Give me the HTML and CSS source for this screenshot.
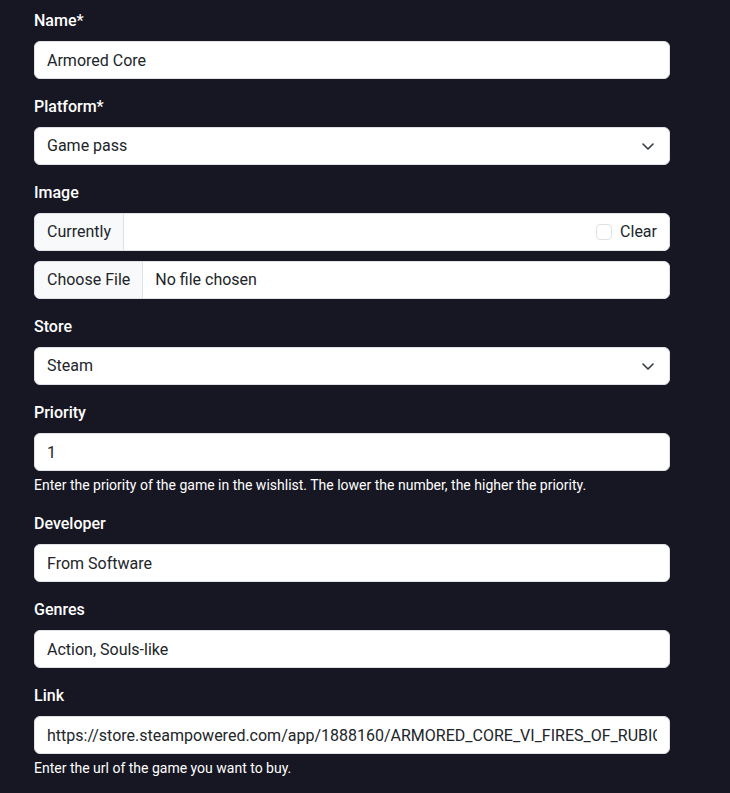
FILE: index.html
```html
<!DOCTYPE html>
<html lang="en">
<head>
<meta charset="utf-8">
<title>Edit game</title>
<link rel="stylesheet" href="styles.css">
</head>
<body>
<form class="form">
  <div class="field">
    <label class="label" for="name">Name*</label>
    <input class="control" id="name" type="text" value="Armored Core">
  </div>
  <div class="field">
    <label class="label">Platform*</label>
    <div class="control select"><span>Game pass</span>
      <svg class="chev" viewBox="0 0 12 7" width="12" height="7"><path d="M1 1l5 5 5-5" fill="none" stroke="#343a40" stroke-width="1.6" stroke-linecap="round" stroke-linejoin="round"/></svg>
    </div>
  </div>
  <div class="field">
    <label class="label">Image</label>
    <div class="group">
      <span class="addon">Currently</span>
      <div class="group-main"><span class="check"></span><span>Clear</span></div>
    </div>
    <div class="group file">
      <span class="addon">Choose File</span>
      <div class="group-main left"><span>No file chosen</span></div>
    </div>
  </div>
  <div class="field">
    <label class="label">Store</label>
    <div class="control select"><span>Steam</span>
      <svg class="chev" viewBox="0 0 12 7" width="12" height="7"><path d="M1 1l5 5 5-5" fill="none" stroke="#343a40" stroke-width="1.6" stroke-linecap="round" stroke-linejoin="round"/></svg>
    </div>
  </div>
  <div class="field">
    <label class="label" for="priority">Priority</label>
    <input class="control" id="priority" type="text" value="1">
    <div class="help">Enter the priority of the game in the wishlist. The lower the number, the higher the priority.</div>
  </div>
  <div class="field">
    <label class="label" for="dev">Developer</label>
    <input class="control" id="dev" type="text" value="From Software">
  </div>
  <div class="field">
    <label class="label" for="genres">Genres</label>
    <input class="control" id="genres" type="text" value="Action, Souls-like">
  </div>
  <div class="field">
    <label class="label" for="link">Link</label>
    <input class="control" id="link" type="text" value="https://store.steampowered.com/app/1888160/ARMORED_CORE_VI_FIRES_OF_RUBICON/">
    <div class="help">Enter the url of the game you want to buy.</div>
  </div>
</form>
</body>
</html>
```
FILE: styles.css
```css
* { box-sizing: border-box; }
html, body { margin: 0; padding: 0; }
body {
  background: #171723;
  font-family: Roboto, "Liberation Sans", sans-serif;
  font-size: 16px;
  line-height: 1.5;
  color: #fff;
}
.form {
  width: 636px;
  margin-left: 34px;
  padding-top: 9px;
}
.field { margin-bottom: 16px; }
.label {
  display: block;
  margin-bottom: 8px;
  font-weight: 500;
  color: #fff;
}
.control {
  display: block;
  width: 100%;
  height: 38px;
  padding: 6px 12px;
  font-family: inherit;
  font-size: 16px;
  line-height: 1.5;
  color: #212529;
  background: #fff;
  border: 1px solid #dee2e6;
  border-radius: 6px;
  outline: none;
  margin: 0;
}
.select {
  display: flex;
  align-items: center;
  justify-content: space-between;
}
.chev { display: block; margin-right: 3px; }
.group {
  display: flex;
  height: 38px;
  background: #fff;
  border: 1px solid #dee2e6;
  border-radius: 6px;
  overflow: hidden;
  color: #212529;
}
.group + .group { margin-top: 10px; }
.addon {
  display: flex;
  align-items: center;
  padding: 0 12px;
  background: #f8f9fa;
  border-right: 1px solid #dee2e6;
}
.group-main {
  flex: 1;
  display: flex;
  align-items: center;
  justify-content: flex-end;
  padding: 0 12px;
}
.group-main.left { justify-content: flex-start; }
.check {
  width: 16px;
  height: 16px;
  border: 1px solid #dee2e6;
  border-radius: 4px;
  margin-right: 8px;
  background: #fff;
}
.help {
  margin-top: 4px;
  font-size: 14px;
  line-height: 1.5;
  color: #fff;
}
```
